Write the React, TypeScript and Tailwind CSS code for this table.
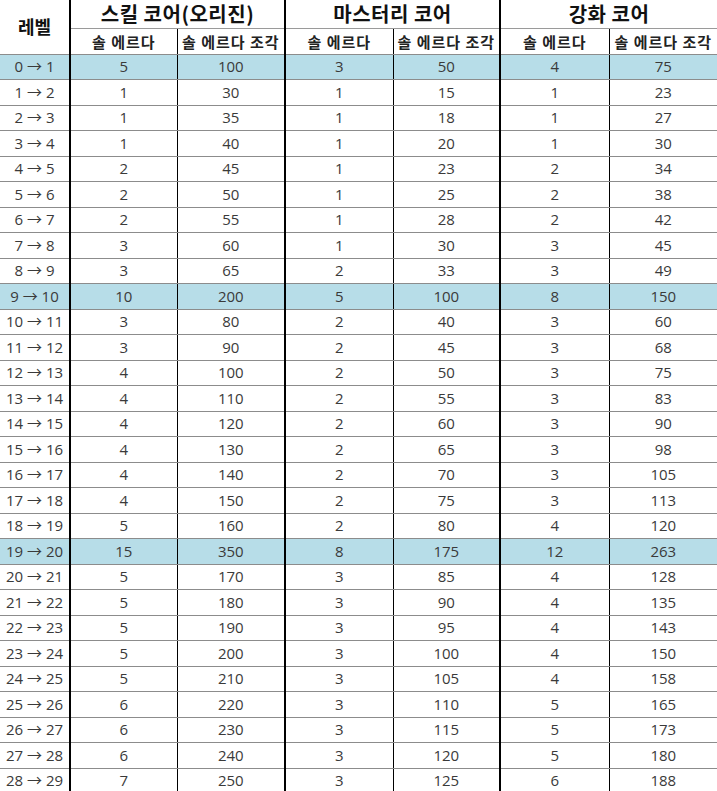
const rows: [string, number[], boolean?][] = [
  ["0 → 1", [5, 100, 3, 50, 4, 75], true],
  ["1 → 2", [1, 30, 1, 15, 1, 23]],
  ["2 → 3", [1, 35, 1, 18, 1, 27]],
  ["3 → 4", [1, 40, 1, 20, 1, 30]],
  ["4 → 5", [2, 45, 1, 23, 2, 34]],
  ["5 → 6", [2, 50, 1, 25, 2, 38]],
  ["6 → 7", [2, 55, 1, 28, 2, 42]],
  ["7 → 8", [3, 60, 1, 30, 3, 45]],
  ["8 → 9", [3, 65, 2, 33, 3, 49]],
  ["9 → 10", [10, 200, 5, 100, 8, 150], true],
  ["10 → 11", [3, 80, 2, 40, 3, 60]],
  ["11 → 12", [3, 90, 2, 45, 3, 68]],
  ["12 → 13", [4, 100, 2, 50, 3, 75]],
  ["13 → 14", [4, 110, 2, 55, 3, 83]],
  ["14 → 15", [4, 120, 2, 60, 3, 90]],
  ["15 → 16", [4, 130, 2, 65, 3, 98]],
  ["16 → 17", [4, 140, 2, 70, 3, 105]],
  ["17 → 18", [4, 150, 2, 75, 3, 113]],
  ["18 → 19", [5, 160, 2, 80, 4, 120]],
  ["19 → 20", [15, 350, 8, 175, 12, 263], true],
  ["20 → 21", [5, 170, 3, 85, 4, 128]],
  ["21 → 22", [5, 180, 3, 90, 4, 135]],
  ["22 → 23", [5, 190, 3, 95, 4, 143]],
  ["23 → 24", [5, 200, 3, 100, 4, 150]],
  ["24 → 25", [5, 210, 3, 105, 4, 158]],
  ["25 → 26", [6, 220, 3, 110, 5, 165]],
  ["26 → 27", [6, 230, 3, 115, 5, 173]],
  ["27 → 28", [6, 240, 3, 120, 5, 180]],
  ["28 → 29", [7, 250, 3, 125, 6, 188]],
];

const groups = ["스킬 코어(오리진)", "마스터리 코어", "강화 코어"];

// vertical border after each data column: thin inside a group, thick between groups
const cellBorder = [
  "border-r border-r-black",
  "border-r-2 border-r-black",
  "border-r border-r-black",
  "border-r-2 border-r-black",
  "border-r border-r-black",
  "",
];

const kr = { fontFamily: '"Noto Sans CJK KR", sans-serif' };

export default function App() {
  return (
    <div
      className="w-[717px] h-[791px] overflow-hidden bg-white"
      style={{ fontFamily: '"Open Sans", "Noto Sans CJK KR", sans-serif' }}
    >
      <table className="w-[717px] table-fixed border-collapse">
        <colgroup>
          <col className="w-[70px]" />
          <col className="w-[107px]" />
          <col className="w-[108px]" />
          <col className="w-[108px]" />
          <col className="w-[107px]" />
          <col className="w-[109px]" />
          <col className="w-[108px]" />
        </colgroup>
        <thead>
          <tr className="h-[28px]">
            <th
              rowSpan={2}
              className="border-r-2 border-r-black border-b border-b-[#8c8c8c] text-[18px] font-bold text-[#111]"
              style={kr}
            >
              레벨
            </th>
            {groups.map((g, i) => (
              <th
                key={g}
                colSpan={2}
                className={`border-b border-b-[#9a9a9a] text-[20px] font-bold leading-none tracking-[0.5px] text-[#111] ${
                  i < 2 ? "border-r-2 border-r-black" : ""
                }`}
                style={kr}
              >
                {g}
              </th>
            ))}
          </tr>
          <tr className="h-[26px]">
            {[0, 1, 2, 3, 4, 5].map((c) => (
              <th
                key={c}
                className={`border-b border-b-[#8c8c8c] px-0 text-[15px] font-bold leading-none tracking-[1px] whitespace-nowrap text-[#222] ${cellBorder[c]}`}
                style={kr}
              >
                {c % 2 === 0 ? "솔 에르다" : "솔 에르다 조각"}
              </th>
            ))}
          </tr>
        </thead>
        <tbody>
          {rows.map(([level, vals, hl]) => (
            <tr
              key={level}
              className={`h-[25.5px] ${hl ? "bg-[#b7dde8]" : "bg-white"}`}
            >
              <td className="border-r-2 border-r-black border-b border-b-[#8c8c8c] text-center text-[15px] leading-none whitespace-nowrap text-[#3a3a3a]">
                {level}
              </td>
              {vals.map((v, c) => (
                <td
                  key={c}
                  className={`border-b border-b-[#8c8c8c] text-center text-[15px] leading-none text-[#3a3a3a] ${cellBorder[c]}`}
                >
                  {v}
                </td>
              ))}
            </tr>
          ))}
        </tbody>
      </table>
    </div>
  );
}
